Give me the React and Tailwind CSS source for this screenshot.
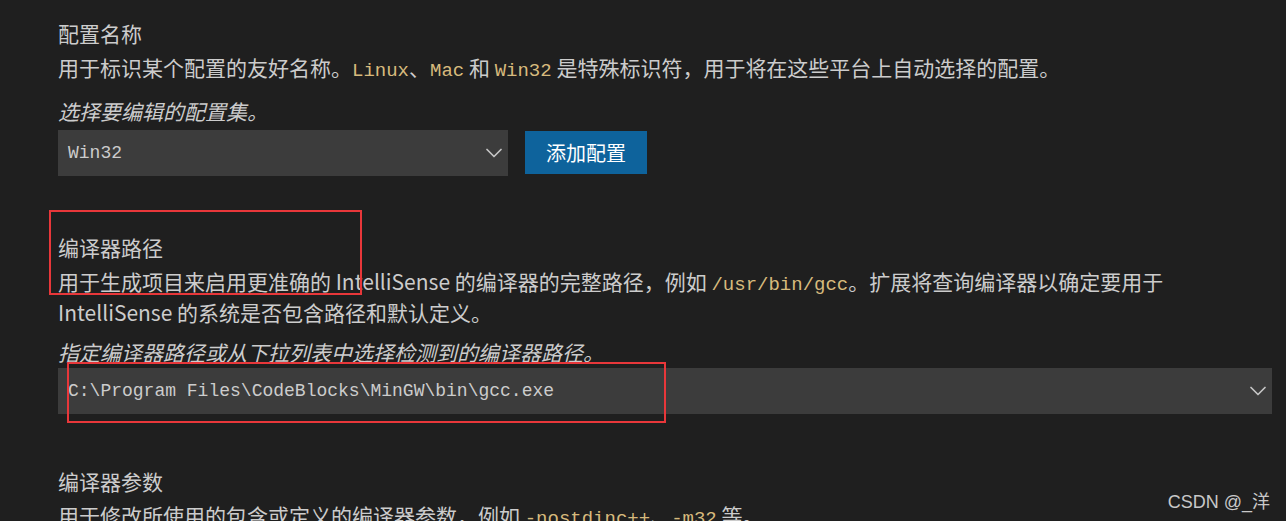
import { ChevronDown } from 'lucide-react';

const body = { fontFamily: '"Noto Sans CJK SC", "Noto Sans", sans-serif' };
const mono = { fontFamily: '"Liberation Mono", "DejaVu Sans Mono", monospace' };

const Code = ({ children }) => (
  <span className="text-[#d7ba7d] text-[19px] leading-none" style={mono}>{children}</span>
);

const Select = ({ value, className }) => (
  <div className={`flex items-center justify-between bg-[#3c3c3c] h-[46px] pl-[10px] ${className}`}>
    <span className="text-[18px] text-[#cccccc]" style={mono}>{value}</span>
    <ChevronDown size={28} strokeWidth={1.5} className="text-[#c5c5c5] shrink-0" />
  </div>
);

export default function App() {
  return (
    <div className="relative h-[521px] overflow-hidden bg-[#1f1f1f] text-[#cccccc] text-[21px] leading-[31px]" style={body}>
      <div className="flex flex-col pl-[58px] pr-[14px] pt-[18px]">
        {/* 配置名称 */}
        <div className="mb-[3px]">配置名称</div>
        <div className="mb-[13px]">
          用于标识某个配置的友好名称。<Code>Linux</Code>、<Code>Mac</Code> 和 <Code>Win32</Code> 是特殊标识符，用于将在这些平台上自动选择的配置。
        </div>
        <div className="italic mb-[3px]">选择要编辑的配置集。</div>
        <div className="flex items-start gap-[17px]">
          <Select value="Win32" className="w-[450px]" />
          <button className="bg-[#0e639c] text-white text-[20px] h-[43px] w-[122px] mt-[1px]">添加配置</button>
        </div>

        {/* 编译器路径 */}
        <div className="mt-[56px] mb-[3px]">编译器路径</div>
        <div className="max-w-[1190px] mb-[9px]">
          用于生成项目来启用更准确的 IntelliSense 的编译器的完整路径，例如 <Code>/usr/bin/gcc</Code>。扩展将查询编译器以确定要用于 IntelliSense 的系统是否包含路径和默认定义。
        </div>
        <div className="italic">指定编译器路径或从下拉列表中选择检测到的编译器路径。</div>
        <Select value="C:\Program Files\CodeBlocks\MinGW\bin\gcc.exe" className="w-full" />

        {/* 编译器参数 */}
        <div className="mt-[52px] mb-[3px]">编译器参数</div>
        <div>
          用于修改所使用的包含或定义的编译器参数，例如 <Code>-nostdinc++</Code>、<Code>-m32</Code> 等。
        </div>
      </div>

      {/* annotation boxes */}
      <div className="absolute left-[49px] top-[210px] w-[313px] h-[85px] border-2 border-[#e8373a]" />
      <div className="absolute left-[67px] top-[362px] w-[599px] h-[61px] border-2 border-[#e8373a]" />

      <div className="absolute right-[16px] top-[489px] text-[18px] leading-[26px] text-[#c8c8c8]" style={{ fontFamily: '"Liberation Sans", "Noto Sans CJK SC", sans-serif' }}>
        CSDN @_洋
      </div>
    </div>
  );
}
